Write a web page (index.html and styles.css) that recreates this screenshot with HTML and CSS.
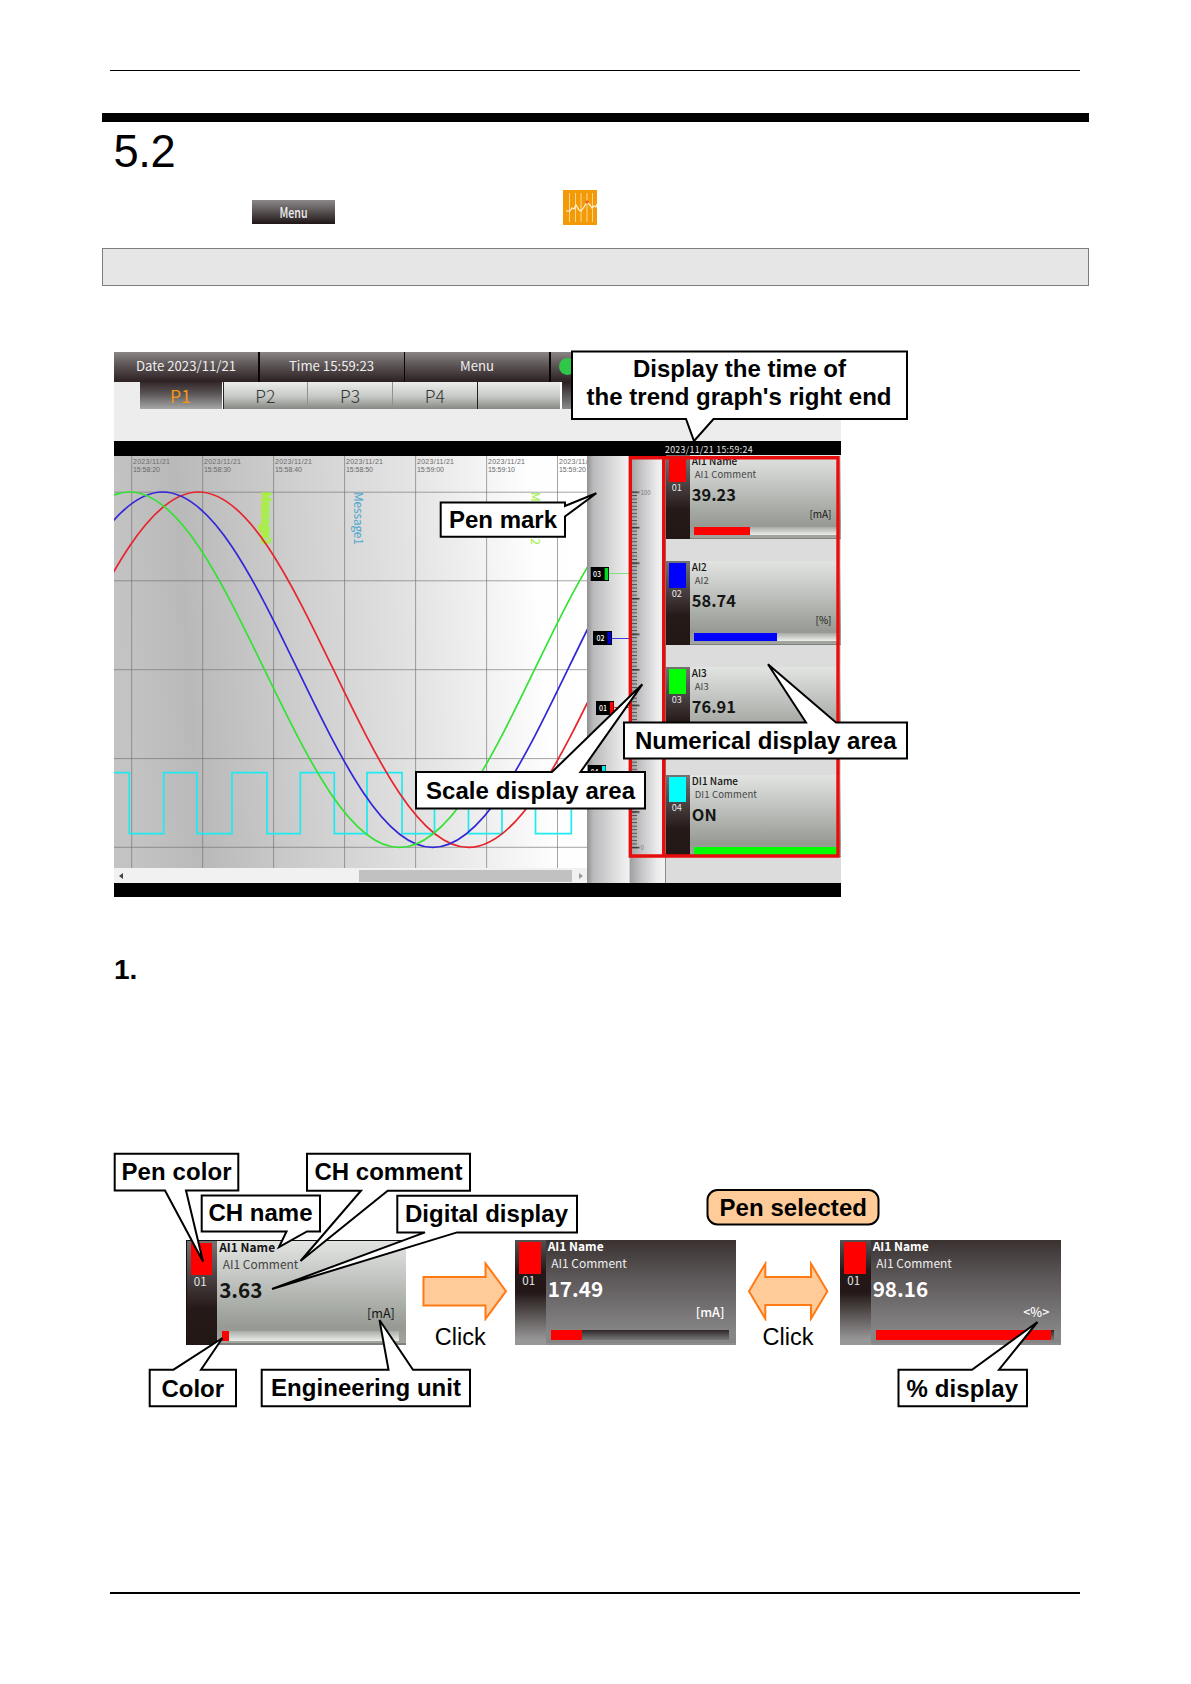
FILE: index.html
```html
<!DOCTYPE html>
<html lang="en">
<head>
<meta charset="utf-8">
<title>5.2</title>
<link rel="stylesheet" href="styles.css">
</head>
<body>
<main class="page">
  <div class="header-rule"></div>
  <h1 class="section-title">5.2</h1>
  <div class="path-row">
    <span class="menu-button"><span>Menu</span></span>
    <svg class="trend-icon" viewBox="0 0 34 35" width="34" height="35">
      <rect width="34" height="35" fill="#f39a09"/>
      <path d="M6.5 3v29M12.5 3v29M18 3v29M24 3v29M29.500 3v29" stroke="#ffd58c" stroke-width="1"/>
      <path d="M3 21h4l2-3 2 1 2-4 3 5 2 1 3-4 3-5 3 3 2 3 2-2 2 1 1-3" fill="none" stroke="#fff6e0" stroke-width="1.2"/>
      <circle cx="24" cy="12" r="1.6" fill="#f2552c"/>
    </svg>
  </div>
  <div class="subtitle-box"></div>

  <figure class="figure-screen">
    <div class="screen">
      <div class="topbar">
        <span>Date 2023/11/21</span><span>Time 15:59:23</span><span>Menu</span><span class="status"><i class="lamp"></i></span>
      </div>
      <div class="tabs">
        <span class="tab active">P1</span><span class="tab">P2</span><span class="tab">P3</span><span class="tab">P4</span><span class="tab"></span><span class="tab dark"></span>
      </div>
      <div class="timebar">2023/11/21 15:59:24</div>
      <div class="monitor">
        <div class="trend">
          <svg class="chart" viewBox="114 456 473 412" width="473" height="412">
            <defs>
              <linearGradient id="bg" x1="0" x2="1" y1="0.06" y2="0">
                <stop offset="0" stop-color="#c3c3c4"/><stop offset=".13" stop-color="#b9b9ba"/><stop offset=".35" stop-color="#cdcdcd"/><stop offset=".62" stop-color="#e4e4e4"/><stop offset=".88" stop-color="#fefefe"/><stop offset="1" stop-color="#fff"/>
              </linearGradient>
              <path id="wave" d="M-135 669.700c44.030-91.030 86.140-177.700 135-177.700s90.970 86.670 135 177.700 86.140 177.700 135 177.700 90.970-86.670 135-177.700 86.140-177.700 135-177.700"/>
            </defs>
            <rect x="114" y="456" width="473" height="412" fill="url(#bg)"/>
            <path d="M131.700 456v412M202.700 456v412M273.600 456v412M344.600 456v412M415.600 456v412M486.600 456v412M557.500 456v412M114 492.200h473M114 580.800h473M114 669.700h473M114 758.600h473M114 847.300h473" stroke="#6e6e6e" stroke-opacity=".62"/>
            <g class="stamps">
              <text x="133" y="463.500" textLength="37">2023/11/21</text><text x="133" y="472" textLength="27">15:58:20</text>
              <text x="204" y="463.500" textLength="37">2023/11/21</text><text x="204" y="472" textLength="27">15:58:30</text>
              <text x="275" y="463.500" textLength="37">2023/11/21</text><text x="275" y="472" textLength="27">15:58:40</text>
              <text x="346" y="463.500" textLength="37">2023/11/21</text><text x="346" y="472" textLength="27">15:58:50</text>
              <text x="417" y="463.500" textLength="37">2023/11/21</text><text x="417" y="472" textLength="27">15:59:00</text>
              <text x="488" y="463.500" textLength="37">2023/11/21</text><text x="488" y="472" textLength="27">15:59:10</text>
              <text x="559" y="463.500" textLength="37">2023/11/21</text><text x="559" y="472" textLength="27">15:59:20</text>
            </g>
            <g class="messages">
              <text transform="translate(262 492) rotate(90)" textLength="52" class="lime heavy">Message2</text>
              <text transform="translate(354 492) rotate(90)" textLength="53" class="sky">Message1</text>
              <text transform="translate(531 492) rotate(90)" textLength="53" class="lime">Message2</text>
            </g>
            <path d="M114 772.700h15.300v61h34.400v-61h33.300v61h35v-61h35v61h33.300v-61h34v61h32.700v-61h35v61h32.500v-61h34v61h33.500v-61h33.500v61h35.800v-61h16" fill="none" stroke="#1eeaf0" stroke-width="1.700"/>
            <g fill="none" stroke-width="1.700">
              <use href="#wave" x="198.500" stroke="#e8242c"/>
              <use href="#wave" x="162.700" stroke="#3227d8"/>
              <use href="#wave" x="129.500" stroke="#33e233"/>
            </g>
          </svg>
          <div class="scrollbar"><i class="arrow left"></i><i class="thumb"></i><i class="arrow right"></i></div>
        </div>
        <svg class="pens" viewBox="587 456 44 427" width="44" height="427">
          <path d="M609 573.500h22" stroke="#7fe07f"/><path d="M612 638.500h19" stroke="#3c3ce0"/><path d="M614 707.500h17" stroke="#e02020"/>
          <path d="M590.700 567H609v14h-18.300zM593 631h19v14h-19zM596 701h18v14h-18zM588 765h18v14h-18z"/>
          <path d="M604.700 568h3.500v12h-3.500z" fill="#0d2"/><path d="M607.500 632h3.500v12h-3.500z" fill="#00d"/><path d="M610 702h3.500v12H610z" fill="#f00"/><path d="M602 766h3.500v12H602z" fill="#0ee"/>
          <g class="pen-ids"><text x="593" y="576.500">03</text><text x="596.500" y="641">02</text><text x="599" y="710.500">01</text><text x="590.500" y="774.500">04</text></g>
        </svg>
        <svg class="scale" viewBox="631 456 35 427" width="35" height="427">
          <defs>
            <pattern id="minor" x="631" y="491.500" width="6" height="3.555" patternUnits="userSpaceOnUse"><path d="M1 .5h5" stroke="#4e4e50" stroke-width="1"/></pattern>
            <pattern id="major" x="631" y="491.300" width="9" height="35.550" patternUnits="userSpaceOnUse"><path d="M1 .8h7.500" stroke="#333" stroke-width="1.400"/></pattern>
          </defs>
          <rect x="631" y="491.500" width="6" height="357" fill="url(#minor)"/>
          <rect x="631" y="491.300" width="9" height="357.500" fill="url(#major)"/>
          <path d="M665.500 456v427" stroke="#8a8a8a"/>
          <text x="640.500" y="494.500" textLength="10">100</text><text x="640.500" y="849.500">0</text>
        </svg>
        <div class="readings">
          <article class="card"><div class="side"><i class="swatch red"></i><span>01</span></div><div class="info"><b>AI1 Name</b><p>AI1 Comment</p><strong>39.23</strong><em>[mA]</em><div class="bar"><i class="red" style="width:38.5%"></i></div></div></article>
          <article class="card"><div class="side"><i class="swatch blue"></i><span>02</span></div><div class="info"><b>AI2</b><p>AI2</p><strong>58.74</strong><em>[%]</em><div class="bar"><i class="blue" style="width:57.500%"></i></div></div></article>
          <article class="card"><div class="side"><i class="swatch green"></i><span>03</span></div><div class="info"><b>AI3</b><p>AI3</p><strong>76.91</strong><em></em><div class="bar"><i class="green" style="width:76.900%"></i></div></div></article>
          <article class="card"><div class="side"><i class="swatch cyan"></i><span>04</span></div><div class="info"><b>DI1 Name</b><p>DI1 Comment</p><strong>ON</strong><em></em><div class="bar"><i class="green" style="width:100%"></i></div></div></article>
        </div>
      </div>
      <div class="screen-foot"></div>
    </div>
    <svg class="callouts" viewBox="114 352 727 545" width="727" height="545">
      <g fill="none" stroke="#e80c0c" stroke-width="3.400"><path class="frame" d="M630.300 457.700H838V856H630.300zM663.700 457.700V856"/></g>
      <path d="M572 351.500h335V419H713.500L694 441l-8-22H572z"/>
      <path d="M440.700 502.500H565v3.500l31.300-12.700L565 516.500v20.200H440.700z"/>
      <path d="M416 772h136l90.300-87.700L580.500 772H645v36.400H416z"/>
      <path d="M624 722.500h182l-38-58.200 68 58.200h71v36H624z"/>
      <text x="633" y="376.700" textLength="213">Display the time of</text>
      <text x="586.500" y="404.700" textLength="305">the trend graph's right end</text>
      <text x="449" y="528.300" textLength="108">Pen mark</text>
      <text x="426" y="799" textLength="209">Scale display area</text>
      <text x="635" y="748.700" textLength="261.500">Numerical display area</text>
    </svg>
  </figure>

  <h2 class="step">1.</h2>

  <figure class="figure-cards">
    <div class="card-row">
      <article class="card first"><div class="side"><i class="swatch red"></i><span>01</span></div><div class="info"><b>AI1 Name</b><p>AI1 Comment</p><strong>3.63</strong><em>[mA]</em><div class="bar"><i class="red" style="width:3.700%"></i></div></div></article>
      <div class="step-arrow wide">
        <svg viewBox="422 1261 86 60" width="86" height="60"><path d="M423.500 1277h62v-13.500l20.500 27.700-20.500 27.700v-13.400h-62z"/></svg>
        <span>Click</span>
      </div>
      <article class="card selected"><div class="side"><i class="swatch red"></i><span>01</span></div><div class="info"><b>AI1 Name</b><p>AI1 Comment</p><strong>17.49</strong><em>[mA]</em><div class="bar"><i class="red" style="width:17.300%"></i></div></div></article>
      <div class="step-arrow">
        <svg viewBox="744.500 1261 86 60" width="86" height="60"><path d="M748.500 1291.200l16.300-27.500V1277h45.700v-13.300l16.300 27.500-16.300 27.500V1305h-45.700v13.700z"/></svg>
        <span>Click</span>
      </div>
      <article class="card selected"><div class="side"><i class="swatch red"></i><span>01</span></div><div class="info"><b>AI1 Name</b><p>AI1 Comment</p><strong>98.16</strong><em>&lt;%&gt;</em><div class="bar"><i class="red" style="width:98.160%"></i></div></div></article>
    </div>
    <svg class="callouts" viewBox="114 1153 948 254" width="948" height="254">
      <path d="M114.700 1153.700h123.600v36.800H186l17 71-38-71h-50.300z"/>
      <path d="M307 1153.700h163v37h-82.300l-87.200 70.300 60.500-70.300h-54z"/>
      <path d="M201.700 1195.500H320v36h-13l-28 15.500 7.500-15.500h-84.800z"/>
      <path d="M397.300 1195.700H577v36.700H457L272 1289l153-56.600h-27.700z"/>
      <path d="M149.700 1369.700h23.800l49-31.700-21.500 31.700h35v36.500h-86.300z"/>
      <path d="M261.700 1369.700h126.800l-9-49.700 33.500 49.700h57v36.500H261.700z"/>
      <path d="M898.500 1369.700H972l65.500-47.700-38.500 47.700h28v36.500H898.500z"/>
      <rect x="707.500" y="1190" width="171" height="34.500" rx="10" class="badge"/>
      <text x="121.500" y="1179.500" textLength="110">Pen color</text>
      <text x="314.500" y="1179.500" textLength="148">CH comment</text>
      <text x="208.500" y="1220.700" textLength="104">CH name</text>
      <text x="405" y="1221.500" textLength="163">Digital display</text>
      <text x="161.500" y="1396.500" textLength="62.500">Color</text>
      <text x="271" y="1396" textLength="190">Engineering unit</text>
      <text x="906.500" y="1396.500" textLength="111.500">% display</text>
      <text x="719.500" y="1215.700" textLength="147.500">Pen selected</text>
    </svg>
  </figure>
  <div class="footer-rule"></div>
</main>
</body>
</html>
```
FILE: styles.css
```css
* { box-sizing: border-box; margin: 0; padding: 0; }
i, em { font-style: normal; }
body { background: #fff; color: #000; font-family: "Liberation Sans", Arial, sans-serif; }
svg { display: block; }

.page { width: 1191px; height: 1684px; padding: 70px 102px 0; overflow: hidden; }
.header-rule { height: 1px; margin: 0 9px 42px 8px; background: #000; }
.section-title { height: 68px; padding-left: 11.500px; border-top: 9px solid #000; font-size: 45.3px; font-weight: 400; line-height: 60px; letter-spacing: -.4px; }
.path-row { display: flex; align-items: flex-start; justify-content: space-between; width: 495px; height: 58px; margin-top: 9px; padding-left: 150px; }
.menu-button { width: 83px; height: 24px; margin-top: 10px; background: linear-gradient(#8b8788, #5c5657 45%, #1f1516); color: #eee; font: 500 14px/24px "Noto Sans CJK JP", sans-serif; text-align: center; }
.menu-button span { display: inline-block; transform: scaleX(.76); }
.subtitle-box { height: 38px; border: 1px solid #7d7d7d; background: #e6e6e6; }

/* Annotated monitor screen */
.figure-screen { position: relative; width: 727px; margin: 66px 0 0 12px; }
.screen { height: 545px; background: #ededed; font-family: "Noto Sans CJK JP", sans-serif; }
.topbar { display: flex; gap: 1.5px; height: 29.5px; background: #0c0505; }
.topbar span { width: 144px; background: linear-gradient(#8a8586, #5b5354 45%, #2c2021); color: #eee; font-size: 13.200px; line-height: 27px; text-align: center; }
.topbar .status { flex: 1; padding: 6px 8px; }
.lamp { display: block; width: 17px; height: 17px; border-radius: 50%; background: #2fc748; }
.tabs { display: flex; height: 59.500px; padding-left: 25.500px; }
.tab { width: 84.700px; height: 27px; border-left: 1px solid #8f938f; background: linear-gradient(#ebeeea, #c4c7c3 55%, #858983); color: #333; font-size: 17.500px; font-weight: 300; line-height: 27px; text-align: center; }
.tab.active { width: 83px; border-left: 0; border-right: 1.500px solid #fff; background: linear-gradient(#33272a, #5c5758 45%, #a6a7a6); color: #f5960f; font-weight: 400; }
.tab:nth-child(2), .tab:nth-child(5) { border-left-color: #222; }
.tab:nth-child(5) { width: 83.500px; }
.tab.dark { flex: 1; border-left: 2px solid #fff; background: linear-gradient(#2a2022, #8a8a8a); }
.timebar { height: 15px; padding-left: 551px; background: #000; color: #e6e6e6; font-size: 8.800px; line-height: 17px; letter-spacing: .3px; white-space: nowrap; }
.monitor { display: flex; height: 427px; }
.trend { width: 473px; }
.stamps { fill: #6a6a6a; font-size: 7px; font-family: "Liberation Sans", sans-serif; }
.messages { font-size: 12px; }
.lime { fill: #9df03c; }
.heavy { stroke: #a8ee45; stroke-width: 1.6px; }
.sky { fill: #4ba7cf; }
.scrollbar { display: flex; align-items: center; height: 15px; padding: 0 4px 0 5px; background: #f1f1f1; }
.arrow { border: 3px solid transparent; }
.arrow.left { border-left: 0; border-right: 4px solid #444; }
.arrow.right { margin-left: auto; border-right: 0; border-left: 4px solid #999; }
.thumb { width: 212.500px; height: 12px; margin-left: 236px; background: #c1c1c1; }
.pens { background: linear-gradient(90deg, #909092, #bababc 14%, #e6e6e6 75%, #f2f2f2 95%, #888); }
.pen-ids { fill: #fff; font-size: 7px; font-weight: 500; }
.scale { background: linear-gradient(90deg, #a4a4a6, #c5c5c8 30%, #ececec 75%, #f3f3f3); }
.scale text { fill: #777; font-size: 6px; }
.readings { display: flex; flex: 1; flex-direction: column; gap: 22px; margin-top: -1px; background: #dcdcdc; font-size: 10px; }
.screen-foot { height: 14px; background: #000; }

/* Channel reading card, sized in em */
.card { display: flex; flex: none; width: 17.500em; height: 8.400em; font-family: "Noto Sans CJK JP", sans-serif; }
.side { display: flex; flex: none; flex-direction: column; align-items: center; width: 2.430em; padding: .17em .1em 0 0; background: linear-gradient(#767172, #4a4142 35%, #261a19 65%, #231716); color: #e8e8e8; }
.side span { padding-right: .2em; line-height: 1.200em; font-size: .92em; }
.swatch { flex: none; width: 1.700em; height: 2.560em; }
.info { display: flex; flex: 1; flex-direction: column; padding: 0 .15em; border-bottom: .18em solid #7f817e; background: linear-gradient(#e2e4e1, #c3c6c2 35%, #969a93 85%, #a3a59f); color: #151515; white-space: nowrap; }
.info b { font-size: 1em; line-height: 1em; }
.info p { margin-top: .15em; padding-left: .3em; color: #444; font-size: .95em; line-height: 1.580em; }
.info strong { font-size: 1.640em; font-weight: 600; line-height: 1.463em; }
.info em { height: 1.500em; padding-right: .8em; line-height: 1.500em; text-align: right; }
.bar { height: .8em; margin: .63em .1em 0 .25em; background: linear-gradient(#a9aba7, #eceeea); }
.bar i { display: block; height: 100%; }
.red { background: #f00; }
.blue { background: #00f; }
.green { background: #0f0; }
.cyan { background: #0ff; }
.readings .info { padding-top: 1px; }
.readings .info b { font-weight: 500; }
.readings .info p { letter-spacing: .15px; }
.readings .bar { margin-top: .53em; }
.readings .card:last-child { height: 8.200em; margin-top: 2px; }

/* Callouts drawn over the figures */
.callouts { position: absolute; top: 0; left: 0; overflow: visible; font-size: 24px; font-weight: 700; }
.callouts > path { fill: #fff; stroke: #000; stroke-width: 2px; }
.callouts .badge { fill: #fc9; stroke: #000; stroke-width: 2px; }

.step { height: 32px; margin: 57px 0 0 12px; font-size: 28px; line-height: 32px; }

.figure-cards { position: relative; width: 948px; height: 254px; margin: 167px 0 0 12px; padding: 87px 0 0 71.700px; }
.card-row { display: flex; align-items: flex-start; font-size: 12.600px; }
.figure-cards .card { width: 220.500px; height: 104.500px; }
.figure-cards .card.first { border-top: 1px solid #111; border-left: 1px solid #111; }
.figure-cards .info { padding-right: .45em; }
.figure-cards .info b { font-size: .95em; }
.figure-cards .info em { padding-right: .45em; }
.selected .side { background: linear-gradient(#555051, #231817 30%, #231817 50%, #979797 95%); }
.selected .info { border-bottom-color: #8d8d8d; background: linear-gradient(#3a3231, #5b5657 35%, #878687 90%); color: #fff; }
.selected .info p { color: #eee; }
.selected .info em { font-weight: 500; }
.selected .bar { background: linear-gradient(#2f2829, #777); }
.step-arrow { display: flex; flex-direction: column; align-items: center; width: 104.500px; padding: 21px 0 0; font: 23.500px/36px "Liberation Sans", Arial, sans-serif; }
.step-arrow.wide { width: 109px; padding-left: 9px; }
.step-arrow.wide span { padding-right: 10px; }
.step-arrow path { fill: #fc9; stroke: #ff7a14; stroke-width: 2px; }
.step-arrow span { height: 24px; line-height: 32px; }

.footer-rule { height: 2px; margin: 185px 9px 0 8px; background: #000; }
```
